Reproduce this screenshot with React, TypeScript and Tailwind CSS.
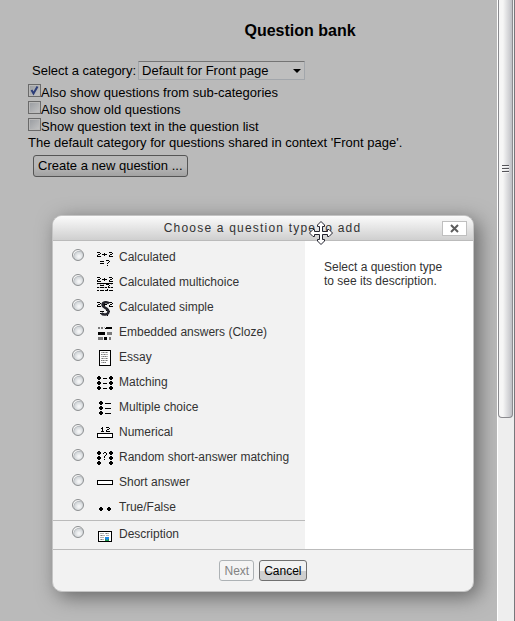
import { useState, type ReactNode } from "react";

type Rows = string[];

const TONES: Record<string, string> = {
  "#": "#000000",
  "+": "#7a7a7a",
  "-": "#b4b4b4",
  b: "#1e88e5",
  g: "#1f9a50",
  w: "#ffffff",
};

/** Draws a small bitmap: each character is one pixel, a dot is empty. */
function Bitmap({ rows, children }: { rows: Rows; children?: ReactNode }) {
  return (
    <svg width="16" height="16" viewBox="0 0 16 16" shapeRendering="crispEdges" aria-hidden="true" className="shrink-0">
      {rows.flatMap((row, y) =>
        row.split("").map((c, x) =>
          c in TONES ? <rect key={`${x}-${y}`} x={x} y={y} width="1" height="1" fill={TONES[c]} /> : null,
        ),
      )}
      {children}
    </svg>
  );
}

const E = "................";

const sum: Rows = [
  E,
  E,
  "###.........###.",
  "...#...#.......#",
  ".##..#####...##.",
  "#......#....#...",
  "####........####",
  E,
  E,
  E,
  ".........###....",
  "...####.....#...",
  "...........#....",
  "...####...#.....",
  E,
  "..........#.....",
];

const sumMulti: Rows = [
  E,
  E,
  "###.........###.",
  "...#...#.......#",
  ".##..#####...##.",
  "#......#....#...",
  "####........####",
  E,
  "################",
  "-..-..-..###..-.",
  "...####.....#...",
  "...........#....",
  "##-####-##.##-##",
  E,
  "..........#.....",
  "##.####.###.####",
];

const cloze: Rows = [
  E,
  E,
  ".++.++.-.######.",
  ".++.++..#######.",
  E,
  E,
  E,
  ".#######..+++++.",
  ".#######..+++++.",
  ".#######..+++++.",
  E,
  E,
  ".+++++.###..++..",
  ".+++++.###..++..",
  ".+++++.###..++..",
  E,
];

const essay: Rows = [
  "..############..",
  "..#wwwwwwwwww#..",
  "..#w--+--+-ww#..",
  "..#wwwwwwwwww#..",
  "..#w+--+---ww#..",
  "..#wwwwwwwwww#..",
  "..#w--+-+--ww#..",
  "..#wwwwwwwwww#..",
  "..#w-+---+-ww#..",
  "..#wwwwwwwwww#..",
  "..#w+-+--+-ww#..",
  "..#wwwwwwwwww#..",
  "..#w--+-+wwww#..",
  "..#wwwwwwwwww#..",
  "..#wwwwwwwwww#..",
  "..############..",
];

const matching: Rows = [
  E,
  ".##..........##.",
  "####........####",
  "####..####..####",
  ".##..........##.",
  E,
  ".##..........##.",
  "####........####",
  "####..####..####",
  ".##..........##.",
  E,
  ".##..........##.",
  "####........####",
  "####..####..####",
  ".##..........##.",
  E,
];

const multiple: Rows = [
  E,
  "...##...........",
  "..####..........",
  "..####..######..",
  "...##...........",
  E,
  "...##...........",
  "..####..........",
  "..####..######..",
  "...##...........",
  E,
  "...##...........",
  "..####..........",
  "..####..######..",
  "...##...........",
  E,
];

const numerical: Rows = [
  E,
  E,
  ".....#...###....",
  "....##......#...",
  ".....#....##....",
  ".....#...#......",
  "....###..####...",
  E,
  "################",
  "#wwwwwwwwwwwwww#",
  "#wwwwwwwwwwwwww#",
  "#wwwwwwwwwwwwww#",
  "################",
  E,
  E,
  E,
];

const random: Rows = [
  E,
  ".##..........##.",
  "####...##...####",
  "####..#..#..####",
  ".##......#...##.",
  "........#.......",
  ".##....#.....##.",
  "####...#....####",
  "####........####",
  ".##....#.....##.",
  E,
  ".##..........##.",
  "####........####",
  "####........####",
  ".##..........##.",
  E,
];

const short: Rows = [
  E,
  E,
  E,
  E,
  E,
  "################",
  "#wwwwwwwwwwwwww#",
  "#wwwwwwwwwwwwww#",
  "#wwwwwwwwwwwwww#",
  "################",
  E,
  E,
  E,
  E,
  E,
  E,
];

const dots: Rows = [
  E,
  E,
  E,
  E,
  E,
  E,
  E,
  "...##......##...",
  "..####....####..",
  "..####....####..",
  "...##......##...",
  E,
  E,
  E,
  E,
  E,
];

const description: Rows = [
  E,
  E,
  E,
  E,
  ".##############.",
  ".#wwwwwwwwwwww#.",
  ".#w----w-+--ww#.",
  ".#wwwwwwwwwwww#.",
  ".#w-+---w---ww#.",
  ".#wwwwwwwwwwww#.",
  ".#w----wbbbbww#.",
  ".#wwwwwwbbbbww#.",
  ".#w-+--wgbbgww#.",
  ".#wwwwwwggggww#.",
  ".##############.",
  E,
];

interface QType {
  id: string;
  label: string;
  icon: Rows;
  overlay?: ReactNode;
}

const questionTypes: QType[] = [
  { id: "calculated", label: "Calculated", icon: sum },
  { id: "calculatedmulti", label: "Calculated multichoice", icon: sumMulti },
  {
    id: "calculatedsimple",
    label: "Calculated simple",
    icon: sum,
    overlay: (
      <path
        d="M12 3.500C10.500 1.500 5.500 1.800 5.500 5C5.500 8 11.500 8 11.500 11.500C11.500 15 6 15.500 4.500 13"
        fill="none"
        stroke="#25252d"
        strokeWidth="2.500"
        shapeRendering="auto"
      />
    ),
  },
  { id: "cloze", label: "Embedded answers (Cloze)", icon: cloze },
  { id: "essay", label: "Essay", icon: essay },
  { id: "match", label: "Matching", icon: matching },
  { id: "multichoice", label: "Multiple choice", icon: multiple },
  { id: "numerical", label: "Numerical", icon: numerical },
  { id: "randomsamatch", label: "Random short-answer matching", icon: random },
  { id: "shortanswer", label: "Short answer", icon: short },
  { id: "truefalse", label: "True/False", icon: dots },
];

const otherTypes: QType[] = [{ id: "description", label: "Description", icon: description }];

function TypeRow({ type, selected, onSelect }: { type: QType; selected: boolean; onSelect: (id: string) => void }) {
  return (
    <label htmlFor={type.id} className="flex h-[25px] items-center pl-[19px]">
      <input
        id={type.id}
        type="radio"
        name="qtype"
        checked={selected}
        onChange={() => onSelect(type.id)}
        className="mb-1 size-3 shrink-0 appearance-none rounded-full border border-[#8c8f91] bg-[radial-gradient(circle_at_60%_65%,#f4f5f6_10%,#d3d7da_50%,#b4b9bd_58%,#f4f4f4_66%)] checked:bg-[radial-gradient(circle,#1c5180_35%,#f4f4f4_45%)]"
      />
      <span className="mt-0.5 ml-[13px] flex">
        <Bitmap rows={type.icon}>{type.overlay}</Bitmap>
      </span>
      <span className="ml-1.5 whitespace-nowrap">{type.label}</span>
    </label>
  );
}

function CheckRow({ id, label, initial = false }: { id: string; label: string; initial?: boolean }) {
  const [on, setOn] = useState(initial);
  return (
    <div className="flex h-4 items-center">
      <span className="relative mb-1 flex size-[13px] shrink-0">
        <input
          id={id}
          type="checkbox"
          checked={on}
          onChange={(e) => setOn(e.target.checked)}
          className="size-[13px] appearance-none border border-[#6a6a6a] bg-linear-to-br from-[#989ba0] to-[#c4c4c4] shadow-[inset_0_0_0_1px_#b9b9b9]"
        />
        {on && (
          <svg viewBox="0 0 13 13" className="pointer-events-none absolute inset-0" aria-hidden="true">
            <path d="M3.500 6L5.500 9.500L9.500 2.500" fill="none" stroke="#2c3d78" strokeWidth="2" />
          </svg>
        )}
      </span>
      <label htmlFor={id}>{label}</label>
    </div>
  );
}

function MoveCursor() {
  return (
    <svg
      width="24"
      height="24"
      viewBox="0 0 24 24"
      aria-hidden="true"
      className="pointer-events-none absolute top-[5px] left-[256px]"
    >
      <path
        d="M12 0.500L15.500 4V5.500H13.500V10.500H18.500V8.500H20L23.500 12L20 15.500H18.500V13.500H13.500V18.500H15.500V20L12 23.500L8.500 20V18.500H10.500V13.500H5.500V15.500H4L0.500 12L4 8.500H5.500V10.500H10.500V5.500H8.500V4Z"
        fill="#ffffff"
        stroke="#22222e"
        strokeWidth="1"
      />
    </svg>
  );
}

function ChooserDialog() {
  const [selected, setSelected] = useState("");
  return (
    <section
      role="dialog"
      aria-labelledby="chooser-title"
      className="absolute top-[215px] right-[23px] left-[52px] rounded-[10px] border border-[#c4c4c4] bg-[#f2f2f2] text-xs text-[#333333] shadow-[5px_5px_20px_0_#666666]"
    >
      <header className="flex h-[25px] items-center rounded-t-[9px] border-b border-[#bbbbbb] bg-linear-to-b from-[#fbfbfb] to-[#cfcfcf] pr-1.5">
        <h2 id="chooser-title" className="flex-1 pl-[30px] text-center tracking-widest">
          Choose a question type to add
        </h2>
        <button
          type="button"
          aria-label="Close"
          className="flex h-[15px] w-[25px] items-center justify-center border border-[#bfbfbf] bg-white"
        >
          <svg width="9" height="9" viewBox="0 0 9 9" aria-hidden="true">
            <path d="M1 1L8 8M8 1L1 8" stroke="#5c5c5c" strokeWidth="2" />
          </svg>
        </button>
      </header>

      <div className="flex border-b border-[#bbbbbb]">
        <fieldset aria-label="Question types" className="w-[252px] shrink-0 pb-[3px]">
          <div className="pt-[3px] pb-px">
            {questionTypes.map((t) => (
              <TypeRow key={t.id} type={t} selected={selected === t.id} onSelect={setSelected} />
            ))}
          </div>
          <div className="border-t border-[#bbbbbb]">
            {otherTypes.map((t) => (
              <TypeRow key={t.id} type={t} selected={selected === t.id} onSelect={setSelected} />
            ))}
          </div>
        </fieldset>
        <p className="flex-1 bg-white px-[19px] pt-[19px] leading-[14px]">
          Select a question type to see its description.
        </p>
      </div>

      <footer className="flex h-[41px] items-center justify-center gap-[5px]">
        <button
          type="button"
          disabled={!selected}
          className="h-[21px] rounded-[3px] border border-[#707070] bg-[#f4f4f4] px-1 text-black disabled:border-[#adb2b5] disabled:text-[#838383]"
        >
          Next
        </button>
        <button
          type="button"
          className="h-[21px] rounded-[3px] border border-[#707070] bg-linear-to-b from-[#f2f2f2] from-50% to-[#cfcfcf] to-50% px-1 text-black"
        >
          Cancel
        </button>
      </footer>
      <MoveCursor />
    </section>
  );
}

function Scrollbar() {
  return (
    <div aria-hidden="true" className="flex w-[18px] shrink-0 flex-col border-r border-l border-r-[#77777b] border-l-white bg-[#eeeeee] pr-px">
      <div className="flex h-[418px] items-center justify-center rounded-b-sm border border-t-0 border-[#8b8b8f] bg-linear-to-r from-[#f6f6f6] from-30% to-[#bfc0c5] pb-[80px]">
        <svg width="7" height="9" viewBox="0 0 7 9" shapeRendering="crispEdges">
          <path d="M0 1.500H7M0 4.500H7M0 7.500H7" stroke="#55555a" />
          <path d="M0 2.500H7M0 5.500H7M0 8.500H7" stroke="#f5f5f5" />
        </svg>
      </div>
    </div>
  );
}

export default function App() {
  return (
    <div className="flex min-h-screen font-['Liberation_Sans',Arial,sans-serif]">
      <main className="relative flex-1 overflow-hidden bg-[#bababa] pt-[21px] pl-7 text-[13px] text-black">
        <h1 className="pl-[75px] text-center text-base leading-5 font-bold">Question bank</h1>

        <div className="mt-5 flex items-center gap-0.5 pl-1">
          <label htmlFor="category">Select a category:</label>
          <div className="relative flex">
            <select
              id="category"
              className="h-[19px] w-[167px] appearance-none rounded-[1px] border border-[#a2a6ab] border-t-[#747474] bg-[#bebebe] pl-[3px] leading-4"
            >
              <option>Default for Front page</option>
            </select>
            <svg width="8" height="4" viewBox="0 0 8 4" aria-hidden="true" className="pointer-events-none absolute top-2 right-1">
              <path d="M0 0H8L4 4Z" fill="#000000" />
            </svg>
          </div>
        </div>

        <div className="mt-1 flex flex-col gap-px">
          <CheckRow id="recurse" label="Also show questions from sub-categories" initial />
          <CheckRow id="showhidden" label="Also show old questions" />
          <CheckRow id="qbshowtext" label="Show question text in the question list" />
        </div>
        <p className="leading-4 whitespace-nowrap">
          The default category for questions shared in context 'Front page'.
        </p>
        <button
          type="button"
          className="mt-1 ml-[5px] h-[22px] rounded-[3px] border border-[#555555] bg-linear-to-b from-[#b8b8b8] from-50% to-[#a2a2a2] px-1"
        >
          Create a new question ...
        </button>

        <ChooserDialog />
      </main>
      <Scrollbar />
    </div>
  );
}
